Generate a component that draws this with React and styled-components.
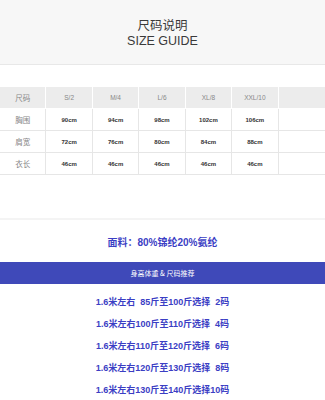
import React from "react";
import styled, {createGlobalStyle} from "styled-components";

const GlobalStyle = createGlobalStyle`
    body {
        margin: 0;
        background: #fff;
        font-family: "Liberation Sans", "Noto Sans CJK SC", sans-serif;
    }
`;

const Page = styled.div`
    width: 325px;
    display: flex;
    flex-direction: column;
`;

const Header = styled.div`
    height: 65px;
    box-sizing: border-box;
    padding-top: 16px;
    background: #f7f7f7;
    border-bottom: 1px solid #e8e8e8;
    display: flex;
    flex-direction: column;
    align-items: center;
    color: #3a3a3a;
`;

const TitleCn = styled.div`
    font-family: "Noto Sans CJK SC", sans-serif;
    font-size: 12.5px;
    line-height: 17px;
`;

const TitleEn = styled.div`
    font-family: "Liberation Sans", sans-serif;
    font-size: 12.5px;
    line-height: 17px;
`;

const Table = styled.div`
    margin-top: 22px;
    display: grid;
    grid-template-columns: repeat(7, 1fr);
`;

const Cell = styled.div`
    height: 22px;
    box-sizing: border-box;
    display: flex;
    align-items: center;
    justify-content: center;
    border-right: 1px solid ${p => p.head ? "#fff" : "#e6e6e6"};
    border-bottom: 1px solid ${p => p.head ? "#fff" : "#e6e6e6"};
    background: ${p => p.head ? "#ececec" : "#fff"};
    color: ${p => p.value ? "#333" : "#888"};
    font-family: ${p => p.cn ? `"Noto Sans CJK SC", sans-serif` : `"Liberation Sans", sans-serif`};
    font-size: ${p => p.cn ? "7.5px" : p.value ? "6px" : "6.5px"};
    font-weight: ${p => p.value ? "bold" : "normal"};
    &:nth-child(7n) {
        border-right: none;
    }
`;

const Divider = styled.div`
    margin-top: 43px;
    height: 2px;
    background: #f4f4f4;
`;

const Fabric = styled.div`
    height: 42px;
    display: flex;
    align-items: center;
    justify-content: center;
    color: #3b3ec4;
    font-size: 10px;
    font-weight: bold;
`;

const Band = styled.div`
    height: 22px;
    background: #3f49b9;
    display: flex;
    align-items: center;
    justify-content: center;
    color: #fff;
    font-family: "Noto Sans CJK SC", sans-serif;
    font-size: 7px;
`;

const List = styled.div`
    padding-top: 6px;
    display: flex;
    flex-direction: column;
    align-items: center;
`;

const Line = styled.div`
    height: 22px;
    display: flex;
    align-items: center;
    color: #3b3ec4;
    font-size: 9px;
    font-weight: bold;
    white-space: pre;
`;

const sizes = ["S/2", "M/4", "L/6", "XL/8", "XXL/10"];
const rows = [
    {label: "胸围", values: ["90cm", "94cm", "98cm", "102cm", "106cm"]},
    {label: "肩宽", values: ["72cm", "76cm", "80cm", "84cm", "88cm"]},
    {label: "衣长", values: ["46cm", "46cm", "46cm", "46cm", "46cm"]},
];
const advice = [
    "1.6米左右  85斤至100斤选择  2码",
    "1.6米左右100斤至110斤选择  4码",
    "1.6米左右110斤至120斤选择  6码",
    "1.6米左右120斤至130斤选择  8码",
    "1.6米左右130斤至140斤选择10码",
];

export default function App() {
    return (
        <Page>
            <GlobalStyle/>
            <Header>
                <TitleCn>尺码说明</TitleCn>
                <TitleEn>SIZE GUIDE</TitleEn>
            </Header>
            <Table>
                <Cell head cn>尺码</Cell>
                {sizes.map(s => <Cell head key={s}>{s}</Cell>)}
                <Cell head/>
                {rows.map(r => (
                    <React.Fragment key={r.label}>
                        <Cell cn>{r.label}</Cell>
                        {r.values.map((v, i) => <Cell value key={i}>{v}</Cell>)}
                        <Cell/>
                    </React.Fragment>
                ))}
            </Table>
            <Divider/>
            <Fabric>面料：80%锦纶20%氨纶</Fabric>
            <Band>身高体重 &amp; 尺码推荐</Band>
            <List>
                {advice.map(a => <Line key={a}>{a}</Line>)}
            </List>
        </Page>
    );
}
